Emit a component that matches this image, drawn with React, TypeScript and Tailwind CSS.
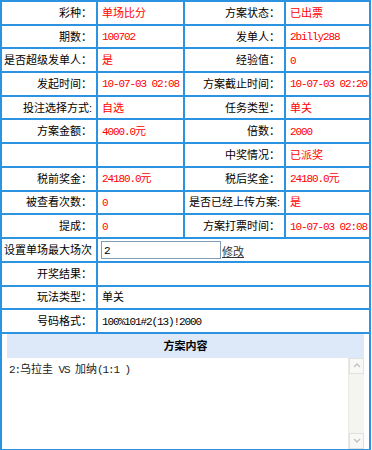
import React from "react";

const F = { fontFamily: '"Liberation Sans", "Noto Sans CJK SC", sans-serif' };

function T({ s }: { s: string }) {
  const parts = s.split(/([\x20-\x7e]+)/).filter((p) => p.length > 0);
  return (
    <>
      {parts.map((p, i) =>
        /^[\x20-\x7e]+$/.test(p) ? (
          <span key={i} className="font-['Liberation_Mono',monospace] tracking-[-1.1px] whitespace-pre">
            {p}
          </span>
        ) : (
          <span key={i}>{p}</span>
        )
      )}
    </>
  );
}

function L({ s }: { s: string }) {
  return (
    <td className="h-[23.7px] border-r-2 border-b-2 border-[#2b93e2] pr-[4px] text-right text-black whitespace-nowrap align-middle">
      {s}
    </td>
  );
}
function V({ s, black, span }: { s: string; black?: boolean; span?: number }) {
  return (
    <td
      colSpan={span}
      className={`h-[23.7px] border-r-2 border-b-2 border-[#2b93e2] pl-[4px] text-left whitespace-nowrap align-middle ${black ? "text-black" : "text-[#ff0000]"}`}
    >
      <T s={s} />
    </td>
  );
}

export default function App() {
  const rows: [string, string, string, string][] = [
    ["彩种：", "单场比分", "方案状态：", "已出票"],
    ["期数：", "100702", "发单人：", "2billy288"],
    ["是否超级发单人：", "是", "经验值：", "0"],
    ["发起时间：", "10-07-03 02:08", "方案截止时间：", "10-07-03 02:20"],
    ["投注选择方式:", "自选", "任务类型：", "单关"],
    ["方案金额：", "4000.0元", "倍数：", "2000"],
    ["", "", "中奖情况：", "已派奖"],
    ["税前奖金：", "24180.0元", "税后奖金：", "24180.0元"],
    ["被查看次数：", "0", "是否已经上传方案:", "是"],
    ["提成：", "0", "方案打票时间：", "10-07-03 02:08"],
  ];
  return (
    <div className="w-[372px] h-[450px] bg-white text-[11px] leading-[14px]" style={F}>
      <table className="w-[371px] border-separate border-spacing-0 border-t-2 border-l-2 border-[#2b93e2] table-fixed">
        <colgroup>
          <col className="w-[96px]" />
          <col className="w-[87px]" />
          <col className="w-[101px]" />
          <col />
        </colgroup>
        <tbody>
          {rows.map((r, i) => (
            <tr key={i}>
              <L s={r[0]} />
              <V s={r[1]} />
              <L s={r[2]} />
              <V s={r[3]} />
            </tr>
          ))}
          <tr>
            <L s="设置单场最大场次" />
            <td colSpan={3} className="h-[24px] border-r-2 border-b-2 border-[#2b93e2] pl-[3px] align-middle">
              <div className="flex items-end h-[18px]">
                <div className="w-[120px] h-[18px] border border-[#7f9db9] bg-white pl-[2px] leading-[16px] text-black">
                  <T s="2" />
                </div>
                <span className="ml-[1px] text-[#333] underline leading-[14px]">修改</span>
              </div>
            </td>
          </tr>
          <tr>
            <L s="开奖结果：" />
            <V span={3} black s="" />
          </tr>
          <tr>
            <L s="玩法类型：" />
            <V span={3} black s="单关" />
          </tr>
          <tr>
            <L s="号码格式：" />
            <V span={3} black s="100%101#2(13)!2000" />
          </tr>
          <tr>
            <td colSpan={4} className="border-r-2 border-b-2 border-[#2b93e2] px-[5px] p-0">
              <div className="h-[24px] bg-[#dde9f8] flex items-center justify-center font-bold text-black">方案内容</div>
              <div className="h-[91px] flex bg-white">
                <div className="flex-1 pl-[2px] pt-[4px] text-[#222]">
                  <T s="2:乌拉圭 VS 加纳(1:1 )" />
                </div>
                <div className="w-[16px] flex flex-col bg-[#f4f4f0] border-l border-[#e8e8e4]">
                  <div className="h-[16px] flex items-center justify-center border border-[#e2e2dc] bg-[#f8f8f6]">
                    <svg width="8" height="5" viewBox="0 0 8 5">
                      <path d="M1 4 L4 1 L7 4" fill="none" stroke="#c4c4c0" strokeWidth="1.5" />
                    </svg>
                  </div>
                  <div className="flex-1" />
                  <div className="h-[16px] flex items-center justify-center border border-[#e2e2dc] bg-[#f8f8f6]">
                    <svg width="8" height="5" viewBox="0 0 8 5">
                      <path d="M1 1 L4 4 L7 1" fill="none" stroke="#c4c4c0" strokeWidth="1.5" />
                    </svg>
                  </div>
                </div>
              </div>
            </td>
          </tr>
        </tbody>
      </table>
    </div>
  );
}
